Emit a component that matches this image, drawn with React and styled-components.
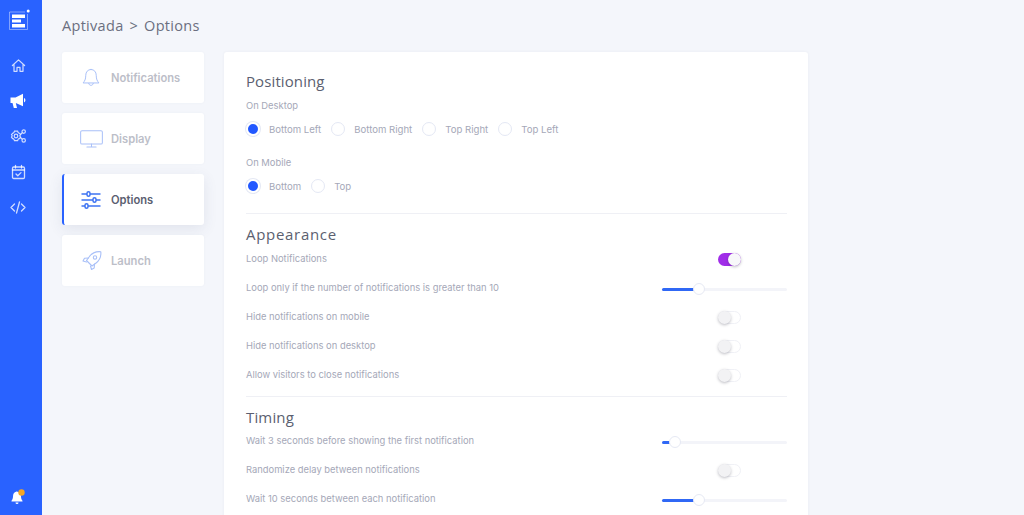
import React from "react";
import styled, { createGlobalStyle } from "styled-components";

const Global = createGlobalStyle`
  html, body { margin: 0; padding: 0; height: 100%; overflow: hidden; }
  body { font-family: "Inter", "Liberation Sans", sans-serif; background: #f4f6fb; }
  * { box-sizing: border-box; }
`;

const Page = styled.div`
  display: flex;
  width: 1024px;
  height: 515px;
  overflow: hidden;
  background: #f4f6fb;
`;

const Sidebar = styled.aside`
  width: 42px;
  flex: none;
  display: flex;
  flex-direction: column;
  align-items: center;
  background: #2962ff;
  padding: 9px 6px 9px 0;
`;

const Logo = styled.div`
  width: 21px;
  height: 22px;
  margin: 0 0 25px 2px;
  display: flex;
`;

const SideIcon = styled.div`
  width: 18px;
  height: 18px;
  margin-bottom: 17.5px;
  display: flex;
  align-items: center;
  justify-content: center;
  color: ${(p) => (p.$active ? "#ffffff" : "rgba(255,255,255,.78)")};
`;

const BellSlot = styled.div`
  margin-top: auto;
  width: 18px;
  height: 18px;
  display: flex;
`;

const Main = styled.main`
  flex: 1;
  padding: 0 0 0 20px;
  min-width: 0;
`;

const Crumb = styled.div`
  height: 52px;
  padding-bottom: 2px;
  display: flex;
  align-items: center;
  gap: 6px;
  font-family: "Open Sans", sans-serif;
  font-size: 14.5px;
  color: #6b6f80;
  letter-spacing: 0.3px;
`;

const Columns = styled.div`
  display: flex;
  align-items: flex-start;
  gap: 20px;
`;

const Nav = styled.nav`
  width: 142px;
  flex: none;
  display: flex;
  flex-direction: column;
  gap: 10px;
`;

const NavCard = styled.div`
  height: 51px;
  display: flex;
  align-items: center;
  background: #fff;
  border-radius: 3px;
  border-left: 2px solid ${(p) => (p.$active ? "#2962ff" : "transparent")};
  box-shadow: ${(p) => (p.$active ? "0 4px 14px rgba(60,70,110,.1)" : "0 0 3px rgba(60,70,110,.04)")};
  font-size: 11.2px;
  font-weight: 600;
  color: ${(p) => (p.$active ? "#5a5e70" : "#bcbec8")};
`;

const NavIconWrap = styled.div`
  width: 47px;
  padding-left: ${(p) => p.$pl}px;
  display: flex;
  flex: none;
`;

const Panel = styled.section`
  width: 584px;
  height: 520px;
  flex: none;
  background: #fff;
  border-radius: 3px;
  box-shadow: 0 0 3px rgba(60,70,110,.06);
  padding: 19px 21px 0 22px;
`;

const Heading = styled.h2`
  margin: ${(p) => p.$mt || 0}px 0 ${(p) => p.$mb || 0}px;
  height: 20px;
  line-height: 20px;
  font-family: "Open Sans", sans-serif;
  font-weight: 400;
  font-size: 15px;
  letter-spacing: ${(p) => p.$ls}px;
  color: #5b5f70;
`;

const SubLabel = styled.div`
  font-size: 9.4px;
  line-height: 14px;
  color: #a5a8b8;
  margin-top: ${(p) => p.$mt || 0}px;
`;

const RadioRow = styled.div`
  display: flex;
  align-items: center;
  height: 16px;
  margin-top: 8px;
`;

const RadioDot = styled.span`
  width: 14px;
  height: 14px;
  border-radius: 50%;
  flex: none;
  margin-right: 9px;
  background: ${(p) => (p.$on ? "#2258ff" : "#fff")};
  border: ${(p) => (p.$on ? "2.5px solid #fff" : "1px solid #e4e8f4")};
  box-shadow: ${(p) => (p.$on ? "0 0 0 1px #e4e8f4" : "none")};
`;

const RadioText = styled.span`
  font-size: 9.6px;
  color: #a5a8b8;
  margin-right: 10px;
  white-space: nowrap;
`;

const Divider = styled.hr`
  border: 0;
  border-top: 1px solid #eff0f5;
  margin: ${(p) => p.$mt}px 0 0;
`;

const SettingRow = styled.div`
  height: 29px;
  display: flex;
  align-items: center;
  justify-content: space-between;
  font-size: 9.4px;
  color: #a5a8b8;
`;

const ToggleSlot = styled.div`
  width: 125px;
  padding: 1px 46px 0 56px;
  display: flex;
  flex: none;
`;

const Toggle = styled.div`
  position: relative;
  width: 23px;
  height: 13px;
  flex: none;
  border-radius: 7px;
  background: ${(p) => (p.$on ? "#a02de8" : "#fff")};
  border: ${(p) => (p.$on ? "0" : "1px solid #f0f1f6")};
`;

const Knob = styled.span`
  position: absolute;
  top: ${(p) => (p.$on ? "0" : "-1px")};
  ${(p) => (p.$on ? "right: 0;" : "left: -1px;")}
  width: 13px;
  height: 13px;
  border-radius: 50%;
  background: ${(p) => (p.$on ? "#f8f8fa" : "#f2f2f4")};
  box-shadow: 0 1px 3px rgba(40,40,60,.3);
`;

const Track = styled.div`
  position: relative;
  width: 125px;
  height: 3px;
  margin-top: 3px;
  flex: none;
  border-radius: 2px;
  background: #f3f4f9;
`;

const Fill = styled.div`
  height: 100%;
  border-radius: 2px;
  background: #3068f5;
`;

const Thumb = styled.span`
  position: absolute;
  top: -4.5px;
  width: 12px;
  height: 12px;
  margin-left: -6px;
  border-radius: 50%;
  background: #fff;
  border: 1px solid #e6e9f4;
`;

const Slider = ({ at }) => (
  <Track>
    <Fill style={{ width: at }} />
    <Thumb style={{ left: at }} />
  </Track>
);

const Switch = ({ on }) => (
  <ToggleSlot>
    <Toggle $on={on}><Knob $on={on} /></Toggle>
  </ToggleSlot>
);

const Radio = ({ on, children }) => (
  <>
    <RadioDot $on={on} />
    <RadioText>{children}</RadioText>
  </>
);

const stroke = { fill: "none", stroke: "currentColor", strokeWidth: 1.3, strokeLinecap: "round", strokeLinejoin: "round" };

const LogoMark = () => (
  <svg width="21" height="22" viewBox="0 0 21 22">
    <path d="M0.500 3V20.500H18.500V5" fill="none" stroke="#fff" strokeOpacity=".6" strokeWidth=".7" />
    <path d="M0.500 3H16" stroke="#fff" strokeOpacity=".6" strokeWidth=".7" />
    <path d="M3 5.500H16V9H3zM3 10.500H12V13.500H3zM3 15H16V18.500H3z" fill="#fff" />
    <circle cx="19.200" cy="2" r="1.500" fill="#fff" />
  </svg>
);

const Home = () => (
  <svg width="15" height="15" viewBox="0 0 16 16" {...stroke}>
    <path d="M1.500 8L8 2l6.500 6M3.200 7v7.200h3.200V10h3.200v4.200h3.200V7" />
  </svg>
);
const Megaphone = () => (
  <svg width="16" height="16" viewBox="0 0 16 16">
    <path d="M0.500 4.500H5.500L13 0.800V13.200L5.800 10 7 15H3.800L2.500 10H0.500zM14 5a2.400 2.400 0 010 4.400z" fill="#fff" />
  </svg>
);
const Gears = () => (
  <svg width="17" height="16" viewBox="0 0 17 16" fill="none" stroke="currentColor" strokeWidth="1.200">
    <path d="M6 3l1.600.1.600 1.500 1.400.8 1 1.200-.8 1.200.8 1.300-1 1.300-1.400.7-.6 1.500-1.600.1-1.500-.1-.6-1.500-1.400-.7-1-1.300.7-1.300-.7-1.200 1-1.200 1.400-.8.600-1.500z" />
    <circle cx="6" cy="8" r="1.800" />
    <circle cx="13.700" cy="3.600" r="1.700" />
    <circle cx="13.700" cy="12.400" r="1.700" />
    <path d="M10.500 6.500L12.300 4.600M10.500 9.500l1.800 1.900" />
  </svg>
);
const Calendar = () => (
  <svg width="15" height="16" viewBox="0 0 15 16" {...stroke}>
    <rect x="1.500" y="3" width="12" height="11.500" rx="1.200" />
    <path d="M1.500 6h12M4.500 1.500v2.500M10.500 1.500v2.500M5 10l1.800 1.800L10 8.600" />
  </svg>
);
const Code = () => (
  <svg width="16" height="13" viewBox="0 0 16 13" {...stroke}>
    <path d="M4.500 3L1 6.500 4.500 10M11.500 3L15 6.500 11.500 10M9.500 1L6.500 12" />
  </svg>
);
const SmallBell = () => (
  <svg width="18" height="18" viewBox="0 0 18 18">
    <path d="M7.500 3.500C5 4 4 6 4 8.500c0 2-.7 3.300-1.500 4.300v.7h11v-.7c-.8-1-1.500-2.300-1.500-4.300C12 6 10.500 4 8 3.500z" fill="#fff" />
    <path d="M6.500 14.500h3a1.500 1.500 0 01-3 0z" fill="#fff" />
    <circle cx="12.500" cy="4.500" r="3.200" fill="#f5a623" />
  </svg>
);

const navStroke = { fill: "none", stroke: "#a9c0f8", strokeWidth: 1.1, strokeLinecap: "round", strokeLinejoin: "round" };

const NavBell = () => (
  <svg width="18" height="22" viewBox="0 0 20 22" {...navStroke}>
    <path d="M10 1.500c-3.800 0-5.800 3-5.800 6.500 0 4.500-1.300 6.500-3 8.500h17.600c-1.700-2-3-4-3-8.500 0-3.500-2-6.500-5.800-6.500zM7.500 17c0 3 5 3 5 0" />
  </svg>
);
const NavDisplay = () => (
  <svg width="23" height="20" viewBox="0 0 25 20" {...navStroke}>
    <rect x="0.700" y="1" width="23.600" height="14.500" rx="1.500" />
    <path d="M12.500 15.500v3M7.500 18.800h10" />
  </svg>
);
const NavSliders = () => (
  <svg width="20" height="18" viewBox="0 0 20 18" fill="none" stroke="#3f74f2" strokeWidth="1.500">
    <path d="M0.500 3H6M9 3H19.500M0.500 9H12M15 9H19.500M0.500 15H4M7 15H19.500" />
    <rect x="6" y="0.800" width="3" height="4.400" rx="1.500" />
    <rect x="12" y="6.800" width="3" height="4.400" rx="1.500" />
    <rect x="4" y="12.800" width="3" height="4.400" rx="1.500" />
  </svg>
);
const NavRocket = () => (
  <svg width="20" height="21" viewBox="0 0 20 20" {...navStroke}>
    <path d="M18.800 1.200c-5-.5-9 1.500-11.500 5L4.500 10l5.500 5.500 3.800-2.800c3.500-2.500 5.500-6.500 5-11.500z" />
    <circle cx="13" cy="7" r="1.700" />
    <path d="M6.500 7.500L2.500 7.800 1 10.500l3.500 1M12.500 13.500l-.3 4-2.700 1.500-1-3.500" />
  </svg>
);

export default function App() {
  return (
    <Page>
      <Global />
      <Sidebar>
        <Logo><LogoMark /></Logo>
        <SideIcon><Home /></SideIcon>
        <SideIcon $active><Megaphone /></SideIcon>
        <SideIcon><Gears /></SideIcon>
        <SideIcon><Calendar /></SideIcon>
        <SideIcon><Code /></SideIcon>
        <BellSlot><SmallBell /></BellSlot>
      </Sidebar>
      <Main>
        <Crumb>
          <span>Aptivada</span><span>&gt;</span><span>Options</span>
        </Crumb>
        <Columns>
          <Nav>
            <NavCard><NavIconWrap $pl={18}><NavBell /></NavIconWrap>Notifications</NavCard>
            <NavCard><NavIconWrap $pl={16}><NavDisplay /></NavIconWrap>Display</NavCard>
            <NavCard $active><NavIconWrap $pl={17}><NavSliders /></NavIconWrap>Options</NavCard>
            <NavCard><NavIconWrap $pl={18}><NavRocket /></NavIconWrap>Launch</NavCard>
          </Nav>
          <Panel>
            <Heading $ls={0.1}>Positioning</Heading>
            <SubLabel $mt={8}>On Desktop</SubLabel>
            <RadioRow>
              <Radio on>Bottom Left</Radio>
              <Radio>Bottom Right</Radio>
              <Radio>Top Right</Radio>
              <Radio>Top Left</Radio>
            </RadioRow>
            <SubLabel $mt={19}>On Mobile</SubLabel>
            <RadioRow>
              <Radio on>Bottom</Radio>
              <Radio>Top</Radio>
            </RadioRow>
            <Divider $mt={19} />
            <Heading $mt={10} $ls={0.7}>Appearance</Heading>
            <SettingRow>Loop Notifications<Switch on /></SettingRow>
            <SettingRow>Loop only if the number of notifications is greater than 10<Slider at="29.5%" /></SettingRow>
            <SettingRow>Hide notifications on mobile<Switch /></SettingRow>
            <SettingRow>Hide notifications on desktop<Switch /></SettingRow>
            <SettingRow>Allow visitors to close notifications<Switch /></SettingRow>
            <Divider $mt={7} />
            <Heading $mt={10} $mb={-1} $ls={0.15}>Timing</Heading>
            <SettingRow>Wait 3 seconds before showing the first notification<Slider at="10%" /></SettingRow>
            <SettingRow>Randomize delay between notifications<Switch /></SettingRow>
            <SettingRow>Wait 10 seconds between each notification<Slider at="29.5%" /></SettingRow>
          </Panel>
        </Columns>
      </Main>
    </Page>
  );
}
